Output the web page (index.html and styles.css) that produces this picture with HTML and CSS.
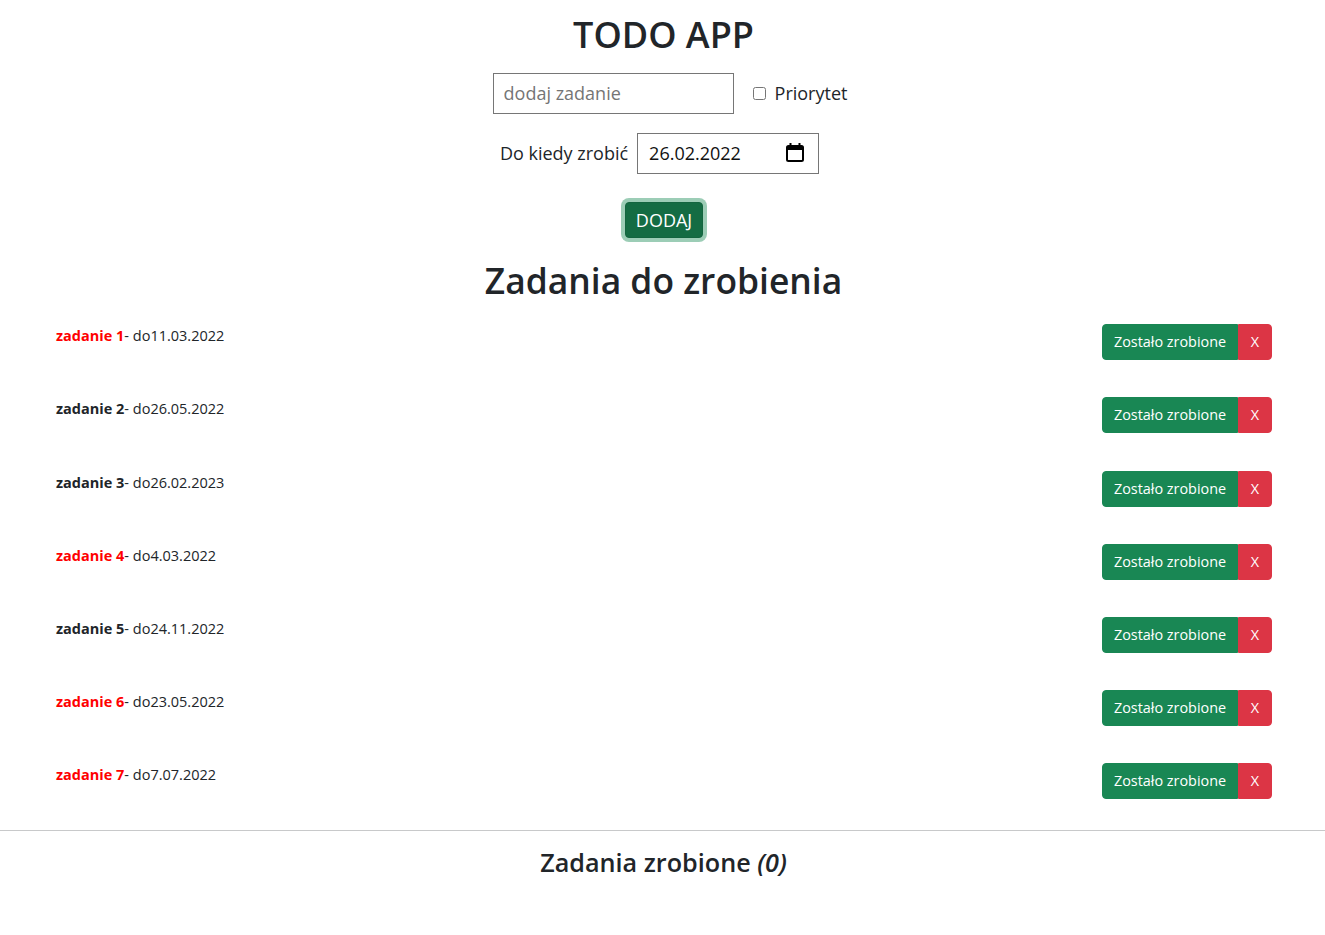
FILE: index.html
```html
<!DOCTYPE html>
<html lang="pl">
<head>
<meta charset="utf-8">
<title>TODO APP</title>
<link rel="stylesheet" href="styles.css">
</head>
<body>
<main class="app">
  <h1 class="title">TODO APP</h1>
  <form class="add-form" onsubmit="return false">
    <div class="row-add">
      <input class="task-input" type="text" placeholder="dodaj zadanie">
      <label class="prio-label"><input class="prio-check" type="checkbox"><span>Priorytet</span></label>
    </div>
    <div class="row-date">
      <span class="date-label">Do kiedy zrobić</span>
      <div class="date-field">
        <span class="date-value">26.02.2022</span>
        <svg class="cal-icon" width="18" height="19" viewBox="0 0 18 19" aria-hidden="true">
          <rect x="3.5" y="0" width="2" height="3" fill="#000"/>
          <rect x="12.5" y="0" width="2" height="3" fill="#000"/>
          <rect x="1" y="3" width="16" height="15" rx="1.5" fill="none" stroke="#000" stroke-width="2"/>
          <rect x="1" y="3" width="16" height="4" fill="#000"/>
        </svg>
      </div>
    </div>
    <button class="btn-add" type="button">DODAJ</button>
  </form>

  <h2 class="section-title">Zadania do zrobienia</h2>
  <ul class="tasks">
    <li class="task"><p class="task-text"><strong class="name is-prio">zadanie 1</strong>- do11.03.2022</p><div class="actions"><button class="btn-done" type="button">Zostało zrobione</button><button class="btn-del" type="button">X</button></div></li>
    <li class="task"><p class="task-text"><strong class="name">zadanie 2</strong>- do26.05.2022</p><div class="actions"><button class="btn-done" type="button">Zostało zrobione</button><button class="btn-del" type="button">X</button></div></li>
    <li class="task"><p class="task-text"><strong class="name">zadanie 3</strong>- do26.02.2023</p><div class="actions"><button class="btn-done" type="button">Zostało zrobione</button><button class="btn-del" type="button">X</button></div></li>
    <li class="task"><p class="task-text"><strong class="name is-prio">zadanie 4</strong>- do4.03.2022</p><div class="actions"><button class="btn-done" type="button">Zostało zrobione</button><button class="btn-del" type="button">X</button></div></li>
    <li class="task"><p class="task-text"><strong class="name">zadanie 5</strong>- do24.11.2022</p><div class="actions"><button class="btn-done" type="button">Zostało zrobione</button><button class="btn-del" type="button">X</button></div></li>
    <li class="task"><p class="task-text"><strong class="name is-prio">zadanie 6</strong>- do23.05.2022</p><div class="actions"><button class="btn-done" type="button">Zostało zrobione</button><button class="btn-del" type="button">X</button></div></li>
    <li class="task"><p class="task-text"><strong class="name is-prio">zadanie 7</strong>- do7.07.2022</p><div class="actions"><button class="btn-done" type="button">Zostało zrobione</button><button class="btn-del" type="button">X</button></div></li>
  </ul>

  <hr class="divider">
  <h4 class="done-title">Zadania zrobione <em>(0)</em></h4>
</main>
</body>
</html>
```
FILE: styles.css
```css
* { box-sizing: border-box; }

html, body {
  margin: 0;
  padding: 0;
  background: #fff;
}

body {
  font-family: "Open Sans", "Noto Sans", sans-serif;
  color: #212529;
}

.app {
  display: flex;
  flex-direction: column;
  align-items: center;
}

.title {
  margin: 12.5px 0 0;
  font-size: 36px;
  font-weight: 600;
  line-height: 1.2;
  padding-left: 2px;
}

.add-form {
  display: flex;
  flex-direction: column;
  align-items: center;
  margin-top: 17px;
}

.row-add {
  display: flex;
  align-items: center;
  padding-left: 15px;
  height: 41px;
}

.task-input {
  width: 241px;
  height: 41px;
  border: 1px solid #767676;
  border-radius: 0;
  padding: 0 10px;
  font-family: inherit;
  font-size: 18px;
  color: #212529;
  outline: none;
}

.task-input::placeholder {
  color: #757575;
}

.prio-label {
  display: flex;
  align-items: center;
  gap: 9px;
  margin-left: 19px;
  font-size: 18px;
}

.prio-check {
  margin: 0;
  width: 13px;
  height: 13px;
}

.row-date {
  display: flex;
  align-items: center;
  gap: 9px;
  margin-top: 19px;
  padding-right: 6px;
  height: 41px;
}

.date-label {
  font-size: 18px;
}

.date-field {
  width: 182px;
  height: 41px;
  border: 1px solid #767676;
  display: flex;
  align-items: center;
  justify-content: space-between;
  padding: 0 14px 0 11px;
  font-size: 18px;
  color: #111;
}

.cal-icon {
  display: block;
  margin-top: -2px;
}

.btn-add {
  margin: 28px 0 0 3px;
  height: 36px;
  padding: 0 10px;
  border: 1px solid #13653f;
  border-radius: 4px;
  background: #146c43;
  color: #fff;
  font-family: inherit;
  font-size: 18px;
  line-height: 24px;
  box-shadow: 0 0 0 4px #9ccdb6;
}

.section-title {
  margin: 21px 0 0;
  font-size: 35.4px;
  font-weight: 600;
  line-height: 1.2;
  padding-left: 2px;
}

.tasks {
  list-style: none;
  align-self: stretch;
  margin: 23px 0 0;
  padding: 0 53px 0 56px;
  display: flex;
  flex-direction: column;
  gap: 37.2px;
}

.task {
  display: flex;
  justify-content: space-between;
  align-items: flex-start;
}

.task-text {
  margin: 0;
  font-size: 14.5px;
  line-height: 24px;
}

.name {
  font-weight: 700;
  color: #212529;
}

.name.is-prio {
  color: #ff0000;
}

.actions {
  display: flex;
}

.btn-done,
.btn-del {
  height: 36px;
  border: 1px solid transparent;
  color: #fff;
  font-family: inherit;
  font-size: 14.4px;
  line-height: 24px;
  padding: 0;
  text-align: center;
}

.btn-done {
  width: 136px;
  background: #198754;
  border-color: #198754;
  border-radius: 4px 0 0 4px;
}

.btn-del {
  width: 34px;
  background: #dc3545;
  border-color: #dc3545;
  border-radius: 0 4px 4px 0;
}

.divider {
  align-self: stretch;
  margin: 31px 0 0;
  border: 0;
  border-top: 1px solid #c8c9ca;
  height: 0;
}

.done-title {
  margin: 16px 0 0;
  font-size: 25.2px;
  font-weight: 600;
  line-height: 1.2;
  padding-left: 2px;
}

.done-title em {
  font-style: italic;
}
```
